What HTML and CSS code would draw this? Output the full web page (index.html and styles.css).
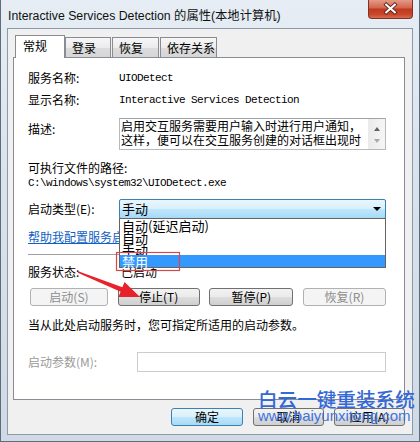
FILE: index.html
```html
<!DOCTYPE html>
<html lang="zh-CN">
<head>
<meta charset="utf-8">
<title>Interactive Services Detection 的属性(本地计算机)</title>
<link rel="stylesheet" href="styles.css">
</head>
<body>
<div class="window">
  <div class="titlebar">
    <span class="title">Interactive Services Detection 的属性(本地计算机)</span>
    <div class="close">
      <svg width="45" height="19" viewBox="0 0 45 19">
        <path d="M18 5.5 L27 13.5 M27 5.5 L18 13.5" stroke="#5b2016" stroke-width="4" stroke-linecap="square"/>
        <path d="M18 5.5 L27 13.5 M27 5.5 L18 13.5" stroke="#ffffff" stroke-width="2.2" stroke-linecap="square"/>
      </svg>
    </div>
  </div>
  <div class="client">
    <div class="tabs">
      <div class="tab active">常规</div>
      <div class="tab t2">登录</div>
      <div class="tab t3">恢复</div>
      <div class="tab t4">依存关系</div>
    </div>
    <div class="panel">
      <div class="row r-name"><span class="lbl">服务名称:</span><span class="val mono">UIODetect</span></div>
      <div class="row r-disp"><span class="lbl">显示名称:</span><span class="val mono">Interactive Services Detection</span></div>
      <div class="row r-desc">
        <span class="lbl lbl-top">描述:</span>
        <div class="desc">
          <div class="desc-text">启用交互服务需要用户输入时进行用户通知，<br>这样，便可以在交互服务创建的对话框出现时</div>
          <div class="vscroll">
            <span class="sarrow up"></span>
            <span class="sarrow down"></span>
          </div>
        </div>
      </div>
      <div class="r-exe">可执行文件的路径:</div>
      <div class="r-path mono">C:\windows\system32\UIODetect.exe</div>
      <div class="row r-type">
        <span class="lbl">启动类型(E):</span>
        <div class="combo">
          <span class="combo-text">手动</span>
          <span class="combo-arrow"></span>
          <div class="droplist">
            <div class="opt">自动(延迟启动)</div>
            <div class="opt">自动</div>
            <div class="opt">手动</div>
            <div class="opt sel">禁用</div>
          </div>
        </div>
      </div>
      <a class="r-link" href="#">帮助我配置服务启动选项。</a>
      <div class="sep"></div>
      <div class="row r-status"><span class="lbl">服务状态:</span><span class="status-val">已启动</span></div>
      <div class="svc-btns">
        <div class="btn disabled b1">启动(S)</div>
        <div class="btn b2">停止(T)</div>
        <div class="btn b3">暂停(P)</div>
        <div class="btn disabled b4">恢复(R)</div>
      </div>
      <div class="hint">当从此处启动服务时，您可指定所适用的启动参数。</div>
      <div class="row r-param"><span class="lbl lbl-wide disabled-text">启动参数(M):</span><div class="input"></div></div>
    </div>
    <div class="dlg-btns">
      <div class="btn default">确定</div>
      <div class="btn">取消</div>
      <div class="btn">应用(A)</div>
    </div>
  </div>
</div>
<svg class="annot" width="420" height="442" viewBox="0 0 420 442">
  <rect x="116.5" y="252.5" width="63" height="18" fill="none" stroke="#d9474a" stroke-width="1.2"/>
  <polygon points="78.2,271.3 122.4,287.2 124.5,282.1 140,297 118.5,296.9 120.6,291.8 77.8,272.7" fill="#e8222b"/>
</svg>
<div class="watermark">
  <div class="wm-cn">白云一键重装系统</div>
  <div class="wm-en">www.baiyunxitong.com</div>
</div>
</body>
</html>
```

FILE: styles.css
```css
html, body {
  margin: 0;
  padding: 0;
}

body {
  width: 420px;
  height: 442px;
  overflow: hidden;
  position: relative;
  font-family: "Noto Sans CJK SC", "Noto Sans", sans-serif;
  font-size: 12px;
  color: #000;
  background: #d6e0ea;
}

.window {
  width: 420px;
  height: 442px;
  box-sizing: border-box;
  border: 1px solid #5f6c7a;
  border-top: none;
  padding: 0 6px 6px;
  background: linear-gradient(to bottom, #e6edf4 0%, #d9e3ed 40%, #cfdae6 100%);
}

.titlebar {
  height: 28px;
  display: flex;
  align-items: flex-start;
  margin: 0 -6px 0 0;
}

.title {
  padding: 8px 0 0 1px;
  line-height: 16px;
  font-family: "Liberation Sans", "Noto Sans CJK SC", sans-serif;
  font-size: 12.3px;
  color: #111;
  white-space: nowrap;
}

.close {
  margin-left: auto;
  margin-right: 6px;
  width: 45px;
  height: 19px;
  box-sizing: border-box;
  border: 1px solid #7d3326;
  border-top: none;
  border-radius: 0 0 4px 4px;
  background: linear-gradient(to bottom, #e39a88 0%, #d46650 42%, #c0391f 52%, #c9462b 80%, #d86a4e 100%);
  display: flex;
  align-items: center;
  justify-content: center;
  overflow: hidden;
}

.close svg {
  display: block;
  margin-top: -1px;
}

.client {
  border: 1px solid #8d99a6;
  background: #f0f0f0;
  padding: 6px 7px 8px 5px;
}

.tabs {
  display: flex;
  align-items: flex-end;
  height: 22px;
  padding-left: 2px;
  position: relative;
  z-index: 1;
}

.tab {
  box-sizing: border-box;
  height: 20px;
  border: 1px solid #898c95;
  border-bottom: none;
  background: linear-gradient(to bottom, #f6f6f6 0%, #ececec 50%, #dcdcdc 51%, #d6d6d6 100%);
  line-height: 20px;
  padding-left: 6px;
  white-space: nowrap;
}

.tab.active {
  width: 50px;
  height: 23px;
  margin-bottom: -1px;
  background: #ffffff;
  line-height: 20px;
  padding-left: 7px;
}

.tab.t2 { width: 46px; }
.tab.t3 { width: 47px; margin-left: 1px; }
.tab.t4 { width: 57px; margin-left: 1px; }

.panel {
  border: 1px solid #898c95;
  background: #ffffff;
  padding: 12px 18px 27px 14px;
}

.row {
  display: flex;
  align-items: center;
}

.lbl {
  width: 91px;
  flex: none;
  line-height: 16px;
}

.lbl-wide { width: 109px; }

.lbl-top {
  align-self: flex-start;
  padding-top: 3px;
}

.mono {
  font-family: "Liberation Mono", "Noto Sans CJK SC", monospace;
  font-size: 11px;
  letter-spacing: -0.6px;
}

.val {
  line-height: 16px;
  white-space: nowrap;
}

.r-name { margin-top: 0; height: 16px; }
.r-disp { margin-top: 6px; height: 16px; }
.r-desc { margin-top: 10px; align-items: flex-start; }

.desc {
  flex: 1;
  height: 32px;
  box-sizing: border-box;
  border: 1px solid #b5b9c0;
  border-top-color: #9ea3aa;
  display: flex;
  background: #fff;
}

.desc-text {
  flex: 1;
  padding: 0 0 0 1px;
  line-height: 14px;
  font-size: 12px;
  white-space: nowrap;
  overflow: hidden;
}

.vscroll {
  width: 17px;
  flex: none;
  background: linear-gradient(to right, #eaeaea, #f6f6f6);
  display: flex;
  flex-direction: column;
  align-items: center;
  justify-content: space-between;
  padding: 8px 0 6px;
  box-sizing: border-box;
}

.sarrow {
  width: 0;
  height: 0;
  border-left: 3.5px solid transparent;
  border-right: 3.5px solid transparent;
}

.sarrow.up { border-bottom: 4px solid #606060; }
.sarrow.down { border-top: 4px solid #a8a8a8; }

.r-exe {
  margin-top: 10px;
  line-height: 16px;
}

.r-path {
  line-height: 14px;
  white-space: nowrap;
}

.r-type { margin-top: 9px; }

.combo {
  flex: 1;
  height: 20px;
  box-sizing: border-box;
  border: 1px solid #3c7fb1;
  border-radius: 2px;
  background: linear-gradient(to bottom, #eaf6fd 0%, #d9f0fc 48%, #bee6fd 52%, #a7d9f5 100%);
  display: flex;
  align-items: center;
  position: relative;
  padding-left: 2px;
}

.combo-text {
  font-size: 13px;
  line-height: 18px;
}

.combo-arrow {
  margin-left: auto;
  margin-right: 4px;
  width: 0;
  height: 0;
  border-left: 4px solid transparent;
  border-right: 4px solid transparent;
  border-top: 4px solid #000;
}

.droplist {
  position: absolute;
  left: -1px;
  right: -1px;
  top: 18px;
  border: 1px solid #646464;
  background: #ffffff;
  z-index: 5;
}

.opt {
  position: relative;
  height: 12px;
  line-height: 13px;
  font-size: 13px;
  padding-left: 2px;
  white-space: nowrap;
}

.opt.sel {
  background: #3399ff;
  color: #ffffff;
}

.r-link {
  display: block;
  margin-top: 10px;
  line-height: 16px;
  color: #0f5fc4;
  text-decoration: underline;
  white-space: nowrap;
}

.sep {
  margin-top: 9px;
  height: 1px;
  background: #a0a0a0;
}

.r-status { margin-top: 9px; height: 16px; }

.status-val {
  padding-left: 2px;
  line-height: 16px;
}

.svc-btns {
  margin-top: 8px;
  display: flex;
  justify-content: space-between;
  padding-left: 2px;
}

.btn {
  box-sizing: border-box;
  height: 18px;
  border: 1px solid #707070;
  border-radius: 3px;
  background: linear-gradient(to bottom, #f2f2f2 0%, #ebebeb 48%, #dddddd 52%, #cfcfcf 100%);
  display: flex;
  align-items: center;
  justify-content: center;
  line-height: 16px;
  font-size: 12px;
  white-space: nowrap;
}

.btn.disabled {
  border-color: #adb2b5;
  background: #f4f4f4;
  color: #8d8d8d;
}

.btn.default {
  border-color: #3c7fb1;
  background: linear-gradient(to bottom, #eaf6fd 0%, #d9f0fc 48%, #bee6fd 52%, #a7d9f5 100%);
}

.b1 { width: 78px; }
.b2 { width: 82px; }
.b3 { width: 84px; }
.b4 { width: 83px; }

.hint {
  margin-top: 11px;
  line-height: 16px;
  white-space: nowrap;
}

.r-param { margin-top: 19px; }

.disabled-text { color: #9a9a9a; }

.input {
  flex: 1;
  height: 20px;
  box-sizing: border-box;
  border: 1px solid #c9ccd1;
  background: #ffffff;
}

.dlg-btns {
  margin-top: 8px;
  display: flex;
  justify-content: flex-end;
  gap: 10px;
}

.dlg-btns .btn { width: 71px; }
.dlg-btns .btn.default { width: 72px; }

.annot {
  position: absolute;
  left: 0;
  top: 0;
  z-index: 10;
  pointer-events: none;
}

.watermark {
  position: absolute;
  left: 258px;
  top: 389px;
  z-index: 11;
  pointer-events: none;
  color: #3468d6;
}

.wm-cn {
  font-family: "Noto Sans CJK SC", sans-serif;
  font-size: 19.6px;
  line-height: 20px;
  font-weight: 500;
  white-space: nowrap;
}

.wm-en {
  margin-top: -1px;
  font-family: "Liberation Sans", sans-serif;
  font-size: 15px;
  line-height: 15px;
  color: #3f74dc;
  white-space: nowrap;
}
```
